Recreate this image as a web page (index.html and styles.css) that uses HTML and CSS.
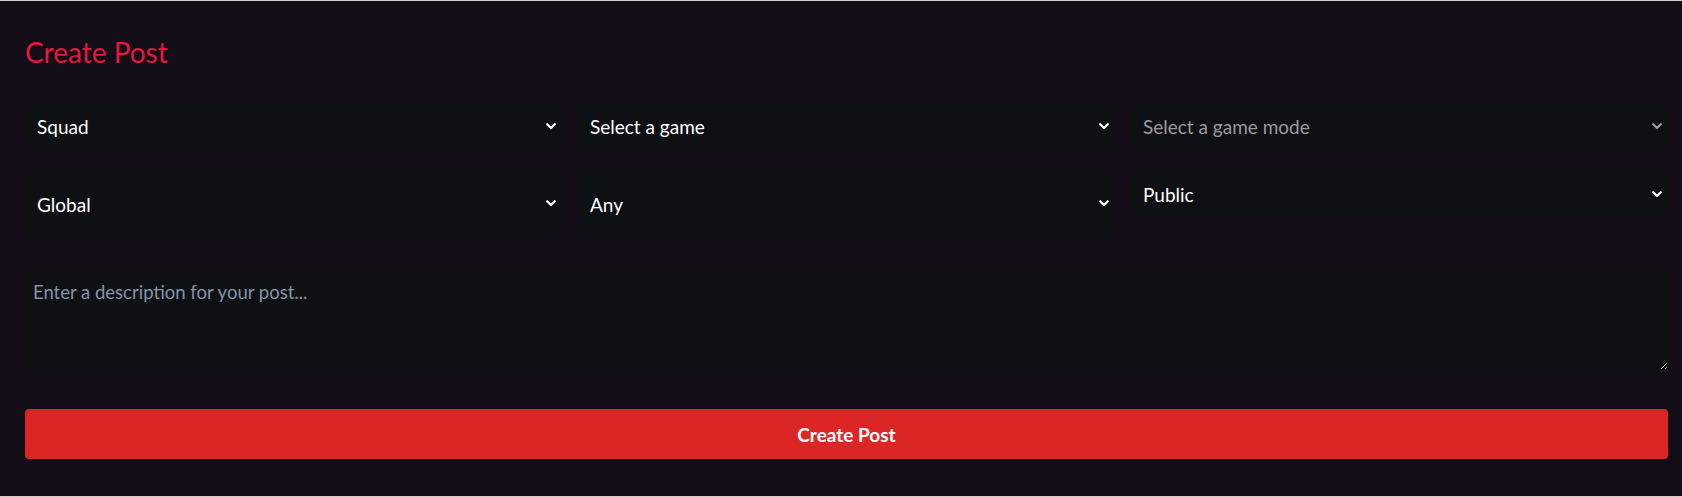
FILE: index.html
```html
<!DOCTYPE html>
<html lang="en">
<head>
<meta charset="utf-8">
<title>Create Post</title>
<link rel="stylesheet" href="styles.css">
</head>
<body>
<main class="card">
  <h1 class="title">Create Post</h1>
  <div class="grid">
    <div class="field">
      <select class="select"><option>Squad</option></select>
      <svg class="chev" viewBox="0 0 10 7" width="10" height="7"><path d="M1.2 1.2 L5 5 L8.8 1.2" fill="none" stroke="currentColor" stroke-width="2.2" stroke-linecap="round" stroke-linejoin="round"/></svg>
    </div>
    <div class="field">
      <select class="select"><option>Select a game</option></select>
      <svg class="chev" viewBox="0 0 10 7" width="10" height="7"><path d="M1.2 1.2 L5 5 L8.8 1.2" fill="none" stroke="currentColor" stroke-width="2.2" stroke-linecap="round" stroke-linejoin="round"/></svg>
    </div>
    <div class="field field-disabled">
      <select class="select" disabled><option>Select a game mode</option></select>
      <svg class="chev" viewBox="0 0 10 7" width="10" height="7"><path d="M1.2 1.2 L5 5 L8.8 1.2" fill="none" stroke="currentColor" stroke-width="2.2" stroke-linecap="round" stroke-linejoin="round"/></svg>
    </div>
    <div class="field">
      <select class="select select-tall"><option>Global</option></select>
      <svg class="chev" viewBox="0 0 10 7" width="10" height="7"><path d="M1.2 1.2 L5 5 L8.8 1.2" fill="none" stroke="currentColor" stroke-width="2.2" stroke-linecap="round" stroke-linejoin="round"/></svg>
    </div>
    <div class="field">
      <select class="select select-tall"><option>Any</option></select>
      <svg class="chev" viewBox="0 0 10 7" width="10" height="7"><path d="M1.2 1.2 L5 5 L8.8 1.2" fill="none" stroke="currentColor" stroke-width="2.2" stroke-linecap="round" stroke-linejoin="round"/></svg>
    </div>
    <div class="field">
      <select class="select"><option>Public</option></select>
      <svg class="chev" viewBox="0 0 10 7" width="10" height="7"><path d="M1.2 1.2 L5 5 L8.8 1.2" fill="none" stroke="currentColor" stroke-width="2.2" stroke-linecap="round" stroke-linejoin="round"/></svg>
    </div>
  </div>
  <textarea class="desc" placeholder="Enter a description for your post..."></textarea>
  <button class="btn" type="button">Create Post</button>
</main>
</body>
</html>
```

FILE: styles.css
```css
* { box-sizing: border-box; }

html, body {
  margin: 0;
  padding: 0;
  height: 100%;
}

body {
  background: #120d17;
  border-top: 1px solid #cfcfcf;
  border-bottom: 1px solid #cfcfcf;
  font-family: "Lato", "Open Sans", sans-serif;
  color: #ffffff;
}

.card {
  padding: 34px 14px 0 25px;
  display: flex;
  flex-direction: column;
}

.title {
  margin: 0;
  font-family: "Lato", sans-serif;
  font-weight: 400;
  font-size: 28px;
  line-height: 34px;
  color: #e6173f;
}

.grid {
  margin-top: 34px;
  display: grid;
  grid-template-columns: repeat(3, 1fr);
  column-gap: 16px;
  row-gap: 21px;
  align-items: start;
}

.field {
  position: relative;
  color: #ffffff;
}

.field-disabled {
  color: #9a9a9e;
}

.select {
  display: block;
  width: 100%;
  height: 47px;
  padding: 0 30px 0 12px;
  margin: 0;
  border: none;
  border-radius: 0;
  background: #0f1014;
  color: inherit;
  font-family: "Lato", sans-serif;
  font-size: 19px;
  -webkit-appearance: none;
  appearance: none;
  outline: none;
}

.select:disabled {
  opacity: 1;
  color: #9a9a9e;
}

.select-tall {
  height: 66px;
}

.chev {
  position: absolute;
  right: 6px;
  top: 50%;
  margin-top: -4px;
  pointer-events: none;
}

.desc {
  display: block;
  margin-top: 31px;
  width: 100%;
  height: 102px;
  padding: 13px 8px;
  border: none;
  background: #0f1014;
  color: #ffffff;
  font-family: "Lato", sans-serif;
  font-size: 18.5px;
  outline: none;
  resize: vertical;
}

.desc::placeholder {
  color: #8593a8;
}

.btn {
  display: block;
  margin-top: 39px;
  width: 100%;
  height: 50px;
  border: none;
  border-radius: 4px;
  background: #dc2626;
  color: #ffffff;
  font-family: "Lato", sans-serif;
  font-weight: 700;
  font-size: 19px;
  cursor: pointer;
}
```
